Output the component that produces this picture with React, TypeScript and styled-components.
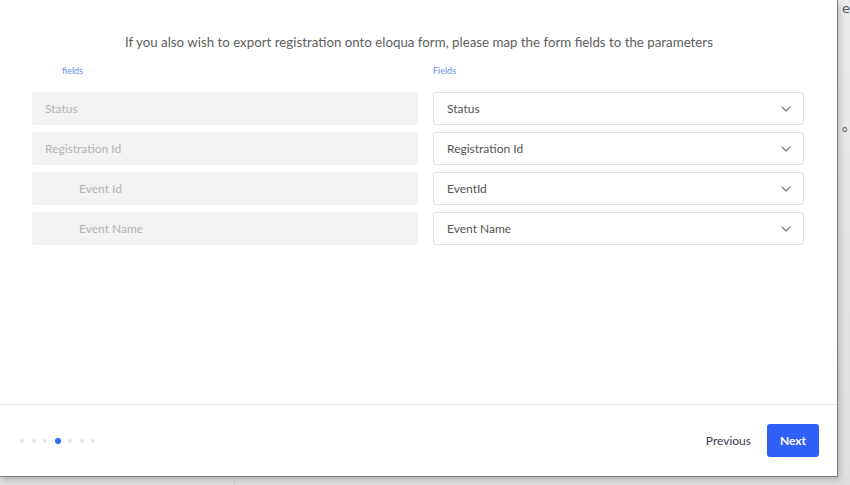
import React from "react";
import styled, { createGlobalStyle } from "styled-components";

const Global = createGlobalStyle`
  html, body { margin: 0; padding: 0; }
  body { background: #e6e6e6; font-family: Lato, "Noto Sans", sans-serif; }
  * { box-sizing: border-box; }
`;

const Page = styled.div`
  width: 850px;
  height: 485px;
  display: flex;
  align-items: flex-start;
  background:
    linear-gradient(90deg, transparent 234px, #cfcfcf 234px, #cfcfcf 235px, transparent 235px),
    linear-gradient(#ebebeb, #dedede);
  overflow: hidden;
`;

const Modal = styled.div`
  width: 838px;
  height: 477px;
  flex: none;
  background: #fff;
  border-right: 1px solid #7a7a7a;
  border-bottom: 1px solid #7a7a7a;
  box-shadow: 2px 3px 6px rgba(0, 0, 0, 0.18);
  display: flex;
  flex-direction: column;
`;

const Side = styled.div`
  flex: 1;
  height: 477px;
  padding-left: 4px;
  display: flex;
  flex-direction: column;
  font-family: "DejaVu Sans", sans-serif;
  color: #444;
`;

const SideGlyph = styled.span<{ $top: number; $size: number }>`
  margin-top: ${(p) => p.$top}px;
  font-size: ${(p) => p.$size}px;
  line-height: 1;
  color: #555;
`;

const Body = styled.div`
  flex: 1;
  padding: 34px 33px 0 32px;
  display: flex;
  flex-direction: column;
`;

const Title = styled.div`
  text-align: center;
  font-size: 13.3px;
  color: #5e5e5e;
  line-height: 16px;
  padding-left: 2px;
`;

const Columns = styled.div`
  margin-top: 14px;
  display: grid;
  grid-template-columns: 386px 371px;
  column-gap: 15px;
`;

const Column = styled.div`
  display: flex;
  flex-direction: column;
  gap: 7px;
`;

const Label = styled.div<{ $indent: number }>`
  font-size: 9px;
  color: #6c8cf0;
  line-height: 12px;
  padding-left: ${(p) => p.$indent}px;
  margin-top: 1px;
  margin-bottom: 8px;
`;

const SourceField = styled.div<{ $indent: number }>`
  height: 33px;
  background: #f2f2f2;
  border-radius: 3px;
  display: flex;
  align-items: center;
  padding-left: ${(p) => p.$indent}px;
  font-size: 12px;
  color: #b5b5b8;
`;

const Select = styled.div`
  height: 33px;
  border: 1px solid #e0e0e0;
  border-radius: 3px;
  display: flex;
  align-items: center;
  justify-content: space-between;
  padding: 0 12px 0 13px;
  font-size: 12px;
  color: #555;
`;

const Footer = styled.div`
  height: 72px;
  border-top: 1px solid #ebebeb;
  display: flex;
  align-items: center;
  justify-content: space-between;
  padding: 0 18px 0 20px;
`;

const Dots = styled.div`
  display: flex;
  align-items: center;
  gap: 7.5px;
`;

const Dot = styled.span<{ $active?: boolean }>`
  width: ${(p) => (p.$active ? 6 : 4)}px;
  height: ${(p) => (p.$active ? 6 : 4)}px;
  border-radius: 50%;
  background: ${(p) => (p.$active ? "#2f6ff0" : "#e4e4e4")};
`;

const Actions = styled.div`
  display: flex;
  align-items: center;
  gap: 16px;
`;

const TextButton = styled.button`
  border: none;
  background: none;
  font-family: Lato, sans-serif;
  font-size: 12px;
  color: #3b3a4c;
  padding: 0;
  cursor: pointer;
`;

const PrimaryButton = styled.button`
  width: 52px;
  height: 33px;
  border: none;
  border-radius: 3px;
  background: #3160f6;
  color: #fff;
  font-family: Lato, sans-serif;
  font-size: 12px;
  font-weight: 700;
  cursor: pointer;
`;

const Chevron = () => (
  <svg width="10" height="6" viewBox="0 0 10 6" fill="none">
    <path d="M1 1L5 5L9 1" stroke="#7d7d86" strokeWidth="1.2" strokeLinecap="round" strokeLinejoin="round" />
  </svg>
);

const sources = [
  { label: "Status", indent: 13 },
  { label: "Registration Id", indent: 13 },
  { label: "Event Id", indent: 47 },
  { label: "Event Name", indent: 47 },
];

const targets = ["Status", "Registration Id", "EventId", "Event Name"];

export default function App() {
  return (
    <>
      <Global />
      <Page>
        <Modal>
          <Body>
            <Title>
              If you also wish to export registration onto eloqua form, please map the form fields to the parameters
            </Title>
            <Columns>
              <Column>
                <Label $indent={30}>fields</Label>
                {sources.map((s) => (
                  <SourceField key={s.label} $indent={s.indent}>
                    {s.label}
                  </SourceField>
                ))}
              </Column>
              <Column>
                <Label $indent={0}>Fields</Label>
                {targets.map((t) => (
                  <Select key={t}>
                    <span>{t}</span>
                    <Chevron />
                  </Select>
                ))}
              </Column>
            </Columns>
          </Body>
          <Footer>
            <Dots>
              <Dot />
              <Dot />
              <Dot />
              <Dot $active />
              <Dot />
              <Dot />
              <Dot />
            </Dots>
            <Actions>
              <TextButton>Previous</TextButton>
              <PrimaryButton>Next</PrimaryButton>
            </Actions>
          </Footer>
        </Modal>
        <Side>
          <SideGlyph $top={2} $size={13}>e</SideGlyph>
          <SideGlyph $top={110} $size={9}>o</SideGlyph>
        </Side>
      </Page>
    </>
  );
}
